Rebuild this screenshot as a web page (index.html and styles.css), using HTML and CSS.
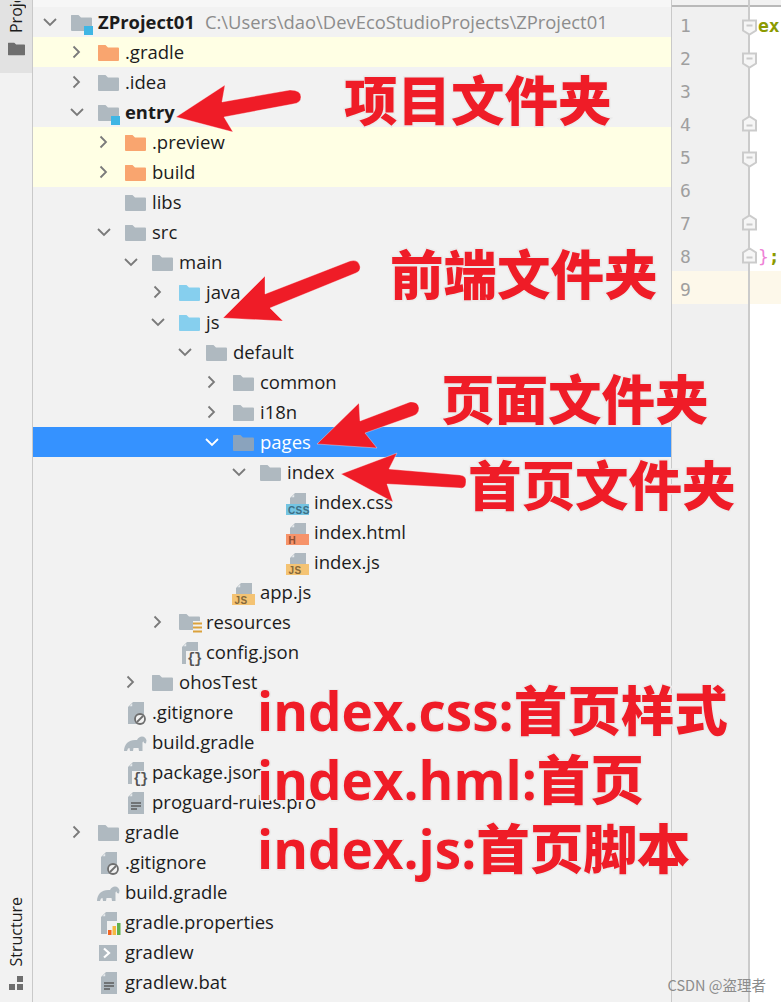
FILE: index.html
```html
<!DOCTYPE html>
<html lang="en">
<head>
<meta charset="utf-8">
<title>ZProject01</title>
<link rel="stylesheet" href="styles.css">
</head>
<body>
<svg class="defs" width="0" height="0" aria-hidden="true">
  <defs>
    <symbol id="fold" viewBox="0 0 21 16"><path d="M0 .5a.5.5 0 0 1 .5-.5H7.500L10 2.500h10a1 1 0 0 1 1 1V15a1 1 0 0 1-1 1H1a1 1 0 0 1-1-1z"/></symbol>
    <symbol id="doc" viewBox="0 0 16 22"><path d="M5 0h11v22H0V5z" fill="#afb9c0"/><path d="M4.200 1.500v2.700H1.500z" fill="#e8ecee"/></symbol>
    <symbol id="elephant" viewBox="0 0 23 20"><path d="M0 19c0-3 1-6 3-8 2-2 5-3 8-3h2c1-2 3-3.500 5-3.500 2.500 0 4 2 4.500 4l-.5 3-2-.5-.5-1.500c-.5 0-1 .5-1 1.500V19h-3.500l-.5-3h-5l-.5 3H6l-.5-3-1.500.5L3 19z" fill="#afb9c0"/></symbol>
    <symbol id="right" viewBox="0 0 14 14"><path d="M3.500 1.500L9 7l-5.500 5.500"/></symbol>
    <symbol id="down" viewBox="0 0 14 14"><path d="M1 4l6 6 6-6"/></symbol>
  </defs>
</svg>
<div class="app">
  <aside class="rail">
    <div class="rail-active">
      <span class="vtext vtext-top">Project</span>
      <svg class="rail-folder" width="17" height="14" viewBox="0 0 21 16"><use href="#fold" width="21" height="16" fill="#6e6e6e"/></svg>
    </div>
    <div class="rail-bottom">
      <span class="vtext">Structure</span>
      <svg width="14" height="14" viewBox="0 0 14 14"><rect x="0" y="8" width="6" height="6" fill="#6e6e6e"/><rect x="8" y="0" width="6" height="6" fill="#6e6e6e"/><rect x="8" y="8" width="6" height="6" fill="#6e6e6e"/></svg>
    </div>
  </aside>

  <main class="tree">
    <div class="row root"><svg class="chev"><use href="#down"/></svg><svg class="ico" viewBox="0 0 23 20"><use href="#fold" y="3" width="21" height="16" fill="#afb9c0"/><rect x="13" y="14" width="9" height="9" fill="#3fb6e4"/></svg><b class="name">ZProject01</b><span class="path">C:\Users\dao\DevEcoStudioProjects\ZProject01</span></div>
    <div class="row l0 lib"><svg class="chev"><use href="#right"/></svg><svg class="ico" viewBox="0 0 23 20"><use href="#fold" y="3" width="21" height="16" fill="#f9a56f"/></svg><span>.gradle</span></div>
    <div class="row l0"><svg class="chev"><use href="#right"/></svg><svg class="ico" viewBox="0 0 23 20"><use href="#fold" y="3" width="21" height="16" fill="#afb9c0"/></svg><span>.idea</span></div>
    <div class="row l0"><svg class="chev"><use href="#down"/></svg><svg class="ico" viewBox="0 0 23 20"><use href="#fold" y="3" width="21" height="16" fill="#afb9c0"/><rect x="13" y="14" width="9" height="9" fill="#3fb6e4"/></svg><b class="name">entry</b></div>
    <div class="row l1 lib"><svg class="chev"><use href="#right"/></svg><svg class="ico" viewBox="0 0 23 20"><use href="#fold" y="3" width="21" height="16" fill="#f9a56f"/></svg><span>.preview</span></div>
    <div class="row l1 lib"><svg class="chev"><use href="#right"/></svg><svg class="ico" viewBox="0 0 23 20"><use href="#fold" y="3" width="21" height="16" fill="#f9a56f"/></svg><span>build</span></div>
    <div class="row l1"><i class="nochev"></i><svg class="ico" viewBox="0 0 23 20"><use href="#fold" y="3" width="21" height="16" fill="#afb9c0"/></svg><span>libs</span></div>
    <div class="row l1"><svg class="chev"><use href="#down"/></svg><svg class="ico" viewBox="0 0 23 20"><use href="#fold" y="3" width="21" height="16" fill="#afb9c0"/></svg><span>src</span></div>
    <div class="row l2"><svg class="chev"><use href="#down"/></svg><svg class="ico" viewBox="0 0 23 20"><use href="#fold" y="3" width="21" height="16" fill="#afb9c0"/></svg><span>main</span></div>
    <div class="row l3"><svg class="chev"><use href="#right"/></svg><svg class="ico" viewBox="0 0 23 20"><use href="#fold" y="3" width="21" height="16" fill="#86cfee"/></svg><span>java</span></div>
    <div class="row l3"><svg class="chev"><use href="#down"/></svg><svg class="ico" viewBox="0 0 23 20"><use href="#fold" y="3" width="21" height="16" fill="#86cfee"/></svg><span>js</span></div>
    <div class="row l4"><svg class="chev"><use href="#down"/></svg><svg class="ico" viewBox="0 0 23 20"><use href="#fold" y="3" width="21" height="16" fill="#afb9c0"/></svg><span>default</span></div>
    <div class="row l5"><svg class="chev"><use href="#right"/></svg><svg class="ico" viewBox="0 0 23 20"><use href="#fold" y="3" width="21" height="16" fill="#afb9c0"/></svg><span>common</span></div>
    <div class="row l5"><svg class="chev"><use href="#right"/></svg><svg class="ico" viewBox="0 0 23 20"><use href="#fold" y="3" width="21" height="16" fill="#afb9c0"/></svg><span>i18n</span></div>
    <div class="row l5 sel"><svg class="chev"><use href="#down"/></svg><svg class="ico" viewBox="0 0 23 20"><use href="#fold" y="3" width="21" height="16" fill="#8aa3bd"/></svg><span>pages</span></div>
    <div class="row l6"><svg class="chev"><use href="#down"/></svg><svg class="ico" viewBox="0 0 23 20"><use href="#fold" y="3" width="21" height="16" fill="#afb9c0"/></svg><span>index</span></div>
    <div class="row l7"><i class="nochev"></i><svg class="ico" viewBox="0 0 23 20"><use href="#doc" x="3" y="1" width="16" height="22"/><rect x="-1" y="12" width="23" height="11" fill="#74c4e2"/><text x="1" y="21.500" class="badge" fill="#3d6f85">CSS</text></svg><span>index.css</span></div>
    <div class="row l7"><i class="nochev"></i><svg class="ico" viewBox="0 0 23 20"><use href="#doc" x="3" y="1" width="16" height="22"/><rect x="-1" y="12" width="23" height="11" fill="#f6936a"/><text x="1.500" y="21.500" class="badge" fill="#8c4e33">H</text></svg><span>index.html</span></div>
    <div class="row l7"><i class="nochev"></i><svg class="ico" viewBox="0 0 23 20"><use href="#doc" x="3" y="1" width="16" height="22"/><rect x="-1" y="12" width="23" height="11" fill="#f4c373"/><text x="1.500" y="21.500" class="badge" fill="#85683a">JS</text></svg><span>index.js</span></div>
    <div class="row l5"><i class="nochev"></i><svg class="ico" viewBox="0 0 23 20"><use href="#doc" x="3" y="1" width="16" height="22"/><rect x="-1" y="12" width="23" height="11" fill="#f4c373"/><text x="1.500" y="21.500" class="badge" fill="#85683a">JS</text></svg><span>app.js</span></div>
    <div class="row l3"><svg class="chev"><use href="#right"/></svg><svg class="ico" viewBox="0 0 23 20"><use href="#fold" y="2" width="21" height="16" fill="#afb9c0"/><path d="M14 9h9v14h-9z" fill="#f2f2f2"/><path d="M14 10.500h9v2h-9zM14 14.500h9v2h-9zM14 18.500h9v2h-9z" fill="#dba23c"/></svg><span>resources</span></div>
    <div class="row l3"><i class="nochev"></i><svg class="ico" viewBox="0 0 23 20"><use href="#doc" x="3" width="16" height="22"/><rect x="7" y="9" width="16" height="14" fill="#f2f2f2"/><text x="8" y="21" class="braces">{}</text></svg><span>config.json</span></div>
    <div class="row l2"><svg class="chev"><use href="#right"/></svg><svg class="ico" viewBox="0 0 23 20"><use href="#fold" y="3" width="21" height="16" fill="#afb9c0"/></svg><span>ohosTest</span></div>
    <div class="row l1"><i class="nochev"></i><svg class="ico" viewBox="0 0 23 20"><use href="#doc" x="3" width="16" height="22"/><circle cx="15" cy="17" r="5" fill="#f2f2f2" stroke="#6e6e6e" stroke-width="1.800"/><path d="M12 20l6-6" stroke="#6e6e6e" stroke-width="1.800"/></svg><span>.gitignore</span></div>
    <div class="row l1"><i class="nochev"></i><svg class="ico" viewBox="0 0 23 20"><use href="#elephant" x="-1" width="23" height="20"/></svg><span>build.gradle</span></div>
    <div class="row l1"><i class="nochev"></i><svg class="ico" viewBox="0 0 23 20"><use href="#doc" x="3" width="16" height="22"/><rect x="7" y="9" width="16" height="14" fill="#f2f2f2"/><text x="8" y="21" class="braces">{}</text></svg><span>package.json</span></div>
    <div class="row l1"><i class="nochev"></i><svg class="ico" viewBox="0 0 23 20"><use href="#doc" x="3" width="16" height="22"/><path d="M6 11h10M6 14h10M6 17h6" stroke="#5c5c5c" stroke-width="1.300"/></svg><span>proguard-rules.pro</span></div>
    <div class="row l0"><svg class="chev"><use href="#right"/></svg><svg class="ico" viewBox="0 0 23 20"><use href="#fold" y="3" width="21" height="16" fill="#afb9c0"/></svg><span>gradle</span></div>
    <div class="row l0"><i class="nochev"></i><svg class="ico" viewBox="0 0 23 20"><use href="#doc" x="3" width="16" height="22"/><circle cx="15" cy="17" r="5" fill="#f2f2f2" stroke="#6e6e6e" stroke-width="1.800"/><path d="M12 20l6-6" stroke="#6e6e6e" stroke-width="1.800"/></svg><span>.gitignore</span></div>
    <div class="row l0"><i class="nochev"></i><svg class="ico" viewBox="0 0 23 20"><use href="#elephant" x="-1" width="23" height="20"/></svg><span>build.gradle</span></div>
    <div class="row l0"><i class="nochev"></i><svg class="ico" viewBox="0 0 23 20"><use href="#doc" x="3" width="16" height="22"/><rect x="9" y="9" width="14" height="14" fill="#f2f2f2"/><rect x="10" y="18" width="3.500" height="5" fill="#f26522"/><rect x="14.500" y="14" width="3.500" height="9" fill="#f4b942"/><rect x="19" y="11" width="3.500" height="12" fill="#5fb04c"/></svg><span>gradle.properties</span></div>
    <div class="row l0"><i class="nochev"></i><svg class="ico" viewBox="0 0 23 20"><rect x="1" y="3" width="18" height="16" fill="#afb9c0"/><path d="M6 6.500l5 4.500-5 4.500" fill="none" stroke="#fff" stroke-width="2.200"/></svg><span>gradlew</span></div>
    <div class="row l0"><i class="nochev"></i><svg class="ico" viewBox="0 0 23 20"><use href="#doc" x="3" width="16" height="22"/><path d="M6 11h10M6 14h10M6 17h6" stroke="#5c5c5c" stroke-width="1.300"/></svg><span>gradlew.bat</span></div>
  </main>

  <section class="editor">
    <div class="gutter">
      <div class="ln"><span>1</span><svg class="mark open" viewBox="0 0 15 16"><path d="M1 1h13v10l-6.500 4L1 11z"/><path d="M4.500 6h6"/></svg></div>
      <div class="ln"><span>2</span><svg class="mark open" viewBox="0 0 15 16"><path d="M1 1h13v10l-6.500 4L1 11z"/><path d="M4.500 6h6"/></svg></div>
      <div class="ln"><span>3</span></div>
      <div class="ln"><span>4</span><svg class="mark shut" viewBox="0 0 15 16"><path d="M1 15h13V5L7.500 1 1 5z"/><path d="M4.500 10h6"/></svg></div>
      <div class="ln"><span>5</span><svg class="mark open" viewBox="0 0 15 16"><path d="M1 1h13v10l-6.500 4L1 11z"/><path d="M4.500 6h6"/></svg></div>
      <div class="ln"><span>6</span></div>
      <div class="ln"><span>7</span><svg class="mark shut" viewBox="0 0 15 16"><path d="M1 15h13V5L7.500 1 1 5z"/><path d="M4.500 10h6"/></svg></div>
      <div class="ln"><span>8</span><svg class="mark shut" viewBox="0 0 15 16"><path d="M1 15h13V5L7.500 1 1 5z"/><path d="M4.500 10h6"/></svg></div>
      <div class="ln cur"><span>9</span></div>
    </div>
    <div class="code">
      <div class="cl"><span class="kw">ex</span></div>
      <div class="cl"></div><div class="cl"></div><div class="cl"></div><div class="cl"></div><div class="cl"></div><div class="cl"></div>
      <div class="cl"><span class="brace">}</span><span class="kw">;</span></div>
      <div class="cl cur"></div>
    </div>
  </section>

  <svg class="arrows" width="781" height="1002" viewBox="0 0 781 1002" aria-hidden="true">
    <path d="M176 117L225 85 222 102 290 90Q301 90 301 97 301 103 293 104L224 117 233 132Z"/>
    <path d="M223 318L265 276 265 294 350 261Q358 259 360 266 361 271 356 273L270 308 283 321Z"/>
    <path d="M317 444L359 403 360 421 410 402Q418 401 419 408 419 414 413 416L365 433 377 448Z"/>
    <path d="M341 474L397 453 389 469 460 475Q467 476 466 482 466 489 460 488L387 484 393 502Z"/>
  </svg>
  <div class="note n1">项目文件夹</div>
  <div class="note n2">前端文件夹</div>
  <div class="note n3">页面文件夹</div>
  <div class="note n4">首页文件夹</div>
  <div class="note n5"><span class="lat">index.css:</span>首页样式</div>
  <div class="note n6"><span class="lat">index.hml:</span>首页</div>
  <div class="note n7"><span class="lat">index.js:</span>首页脚本</div>
  <div class="mark-wm">CSDN @盗理者</div>
</div>
</body>
</html>
```
FILE: styles.css
```css
* { box-sizing: border-box; }
html, body { margin: 0; padding: 0; }
body { width: 781px; height: 1002px; overflow: hidden; background: #f2f2f2; font-family: "Open Sans", "Noto Sans", sans-serif; color: #1c1c1c; }
.defs { position: absolute; }
.app { position: relative; display: flex; width: 781px; height: 1002px; overflow: hidden; }

.rail { width: 33px; flex: none; display: flex; flex-direction: column; justify-content: space-between; background: #f2f2f2; border-right: 1px solid #c9c9c9; }
.rail-active { height: 73px; background: #e2e2e2; display: flex; flex-direction: column; align-items: center; justify-content: flex-end; gap: 9px; padding: 0 0 17px; overflow: hidden; }
.rail-folder { flex: none; }
.rail-bottom { display: flex; flex-direction: column; align-items: center; gap: 9px; padding-bottom: 12px; }
.vtext { writing-mode: vertical-rl; transform: rotate(180deg); font-size: 16px; line-height: 20px; color: #1c1c1c; white-space: nowrap; }
.vtext-top { flex: none; height: 32px; overflow: hidden; text-align: left; }

.tree { width: 639px; flex: none; padding-top: 7px; background: linear-gradient(#f7f7f7 7px, #f2f2f2 7px); border-right: 1px solid #c9c9c9; overflow: hidden; }
.row { height: 30px; display: flex; align-items: center; font-size: 18.500px; line-height: 30px; white-space: nowrap; }
.root { padding-left: 10px; }
.l0 { padding-left: 37px; }
.l1 { padding-left: 64px; }
.l2 { padding-left: 91px; }
.l3 { padding-left: 118px; }
.l4 { padding-left: 145px; }
.l5 { padding-left: 172px; }
.l6 { padding-left: 199px; }
.l7 { padding-left: 226px; }
.lib { background: #ffffe4; }
.sel { background: #3592ff; color: #fff; }
.chev { width: 14px; height: 14px; flex: none; margin-right: 14px; fill: none; stroke: #7a7a7a; stroke-width: 1.800; }
.sel .chev { stroke: #fff; }
.nochev { width: 14px; height: 14px; flex: none; margin-right: 14px; }
.ico { width: 23px; height: 20px; flex: none; margin-right: 4px; overflow: visible; }
.name { font-weight: 700; font-size: 18.400px; }
.path { margin-left: 10px; color: #8c8c8c; font-size: 18.400px; }
.badge { font: 700 10px "Liberation Sans", sans-serif; letter-spacing: .4px; }
.braces { font: 700 14px "Liberation Mono", monospace; fill: #555; letter-spacing: -1.500px; }

.editor { flex: 1; display: flex; background: #fff; }
.gutter { width: 78px; flex: none; padding-top: 7px; background: linear-gradient(#f2f2f2 5px, #b9b9b9 5px, #b9b9b9 7px, #f0f0f0 7px); border-right: 2px solid #cbcbcb; }
.ln { position: relative; height: 33px; display: flex; align-items: center; padding: 5px 0 0 8px; font: 18px/28px "DejaVu Sans Mono", monospace; color: #9f9f9f; }
.mark { position: absolute; right: -9px; width: 15px; height: 17px; fill: #f6f6f6; stroke: #cbcbcb; stroke-width: 2; }
.open { top: 12px; }
.shut { top: 9px; }
.code { flex: 1; padding-top: 7px; background: linear-gradient(#f2f2f2 5px, #b9b9b9 5px, #b9b9b9 7px, #fff 7px); }
.cl { height: 33px; font: 700 18px/38px "DejaVu Sans Mono", monospace; padding-left: 8px; white-space: pre; }
.kw { color: #8b9a00; }
.brace { color: #ee82d6; font-weight: 400; }
.cur { background: #fdf8ea; }

.arrows { position: absolute; left: 0; top: 0; fill: #ef1c27; stroke: #fff; stroke-opacity: .35; stroke-width: 1; pointer-events: none; }
.note { position: absolute; white-space: nowrap; color: #ef1c27; font-weight: 900; font-size: 53.500px; line-height: 60px; font-family: "Noto Sans CJK SC", sans-serif; -webkit-text-stroke: 3px #ebebeb; paint-order: stroke fill; }
.lat { font-family: "Open Sans", sans-serif; font-weight: 700; font-size: 53px; -webkit-text-stroke: 1.200px #ef1c27; text-shadow: 1.500px 0 #ebebeb, -1.500px 0 #ebebeb, 0 1.500px #ebebeb, 0 -1.500px #ebebeb, 1.200px 1.200px #ebebeb, -1.200px 1.200px #ebebeb, 1.200px -1.200px #ebebeb, -1.200px -1.200px #ebebeb; }
.n1 { left: 344px; top: 68px; }
.n2 { left: 390px; top: 242px; }
.n3 { left: 441px; top: 367px; }
.n4 { left: 468px; top: 453px; }
.n5 { left: 257px; top: 678px; }
.n6 { left: 257px; top: 747px; }
.n7 { left: 257px; top: 816px; }
.mark-wm { position: absolute; right: 15px; top: 975px; font: 14.500px/20px "Noto Sans CJK SC", sans-serif; color: #8c8c8c; }
```
